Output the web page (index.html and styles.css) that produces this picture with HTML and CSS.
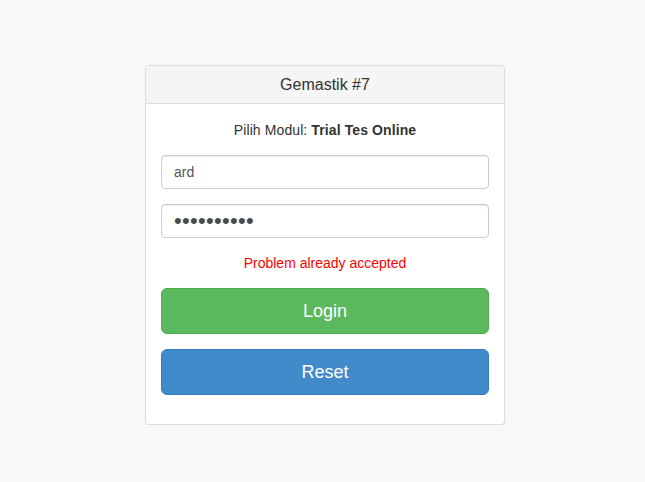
FILE: index.html
```html
<!DOCTYPE html>
<html>
<head>
<meta charset="utf-8">
<link rel="stylesheet" href="styles.css">
</head>
<body>
<div class="page">
  <div class="panel">
    <div class="panel-heading">Gemastik #7</div>
    <div class="panel-body">
      <p class="modul">Pilih Modul: <b>Trial Tes Online</b></p>
      <div class="form-group"><input class="form-control" type="text" value="ard"></div>
      <div class="form-group"><input class="form-control pass" type="password" value="1234567890"></div>
      <p class="error">Problem already accepted</p>
      <button class="btn btn-success">Login</button>
      <button class="btn btn-primary">Reset</button>
    </div>
  </div>
</div>
</body>
</html>
```
FILE: styles.css
```css
* { box-sizing: border-box; }
html, body { margin: 0; padding: 0; }
body {
  background: #f8f8f8;
  font-family: "Liberation Sans", Arial, sans-serif;
  font-size: 14px;
  line-height: 20px;
  color: #333;
}
.page {
  padding-top: 65px;
  padding-left: 145px;
}
.panel {
  width: 360px;
  background: #fff;
  border: 1px solid #ddd;
  border-radius: 4px;
  box-shadow: 0 1px 1px rgba(0,0,0,0.05);
}
.panel-heading {
  background: #f5f5f5;
  border-bottom: 1px solid #ddd;
  border-radius: 3px 3px 0 0;
  height: 38px;
  line-height: 37px;
  text-align: center;
  font-size: 16px;
  color: #333;
}
.panel-body {
  padding: 16px 15px 14px;
  display: flex;
  flex-direction: column;
}
.modul {
  margin: 0 0 15px;
  text-align: center;
  letter-spacing: 0.1px;
}
.form-group { margin-bottom: 15px; }
.form-control {
  display: block;
  width: 100%;
  height: 34px;
  padding: 6px 12px;
  font-family: inherit;
  font-size: 14px;
  color: #555;
  background: #fff;
  border: 1px solid #ccc;
  border-radius: 4px;
  box-shadow: inset 0 1px 1px rgba(0,0,0,0.075);
}
.form-control.pass {
  padding: 0 12px 0 12px;
  font-size: 22px;
  letter-spacing: 0.3px;
  color: #4a4a4a;
}
.error {
  margin: 0 0 15px;
  text-align: center;
  color: #ff0000;
  line-height: 20px;
}
.btn {
  display: block;
  width: 100%;
  height: 46px;
  font-family: inherit;
  font-size: 18px;
  color: #fff;
  border: 1px solid transparent;
  border-radius: 6px;
  margin-bottom: 15px;
  padding: 0;
}
.btn-success { background: #5cb85c; border-color: #4cae4c; }
.btn-primary { background: #428bca; border-color: #357ebd; }
```
